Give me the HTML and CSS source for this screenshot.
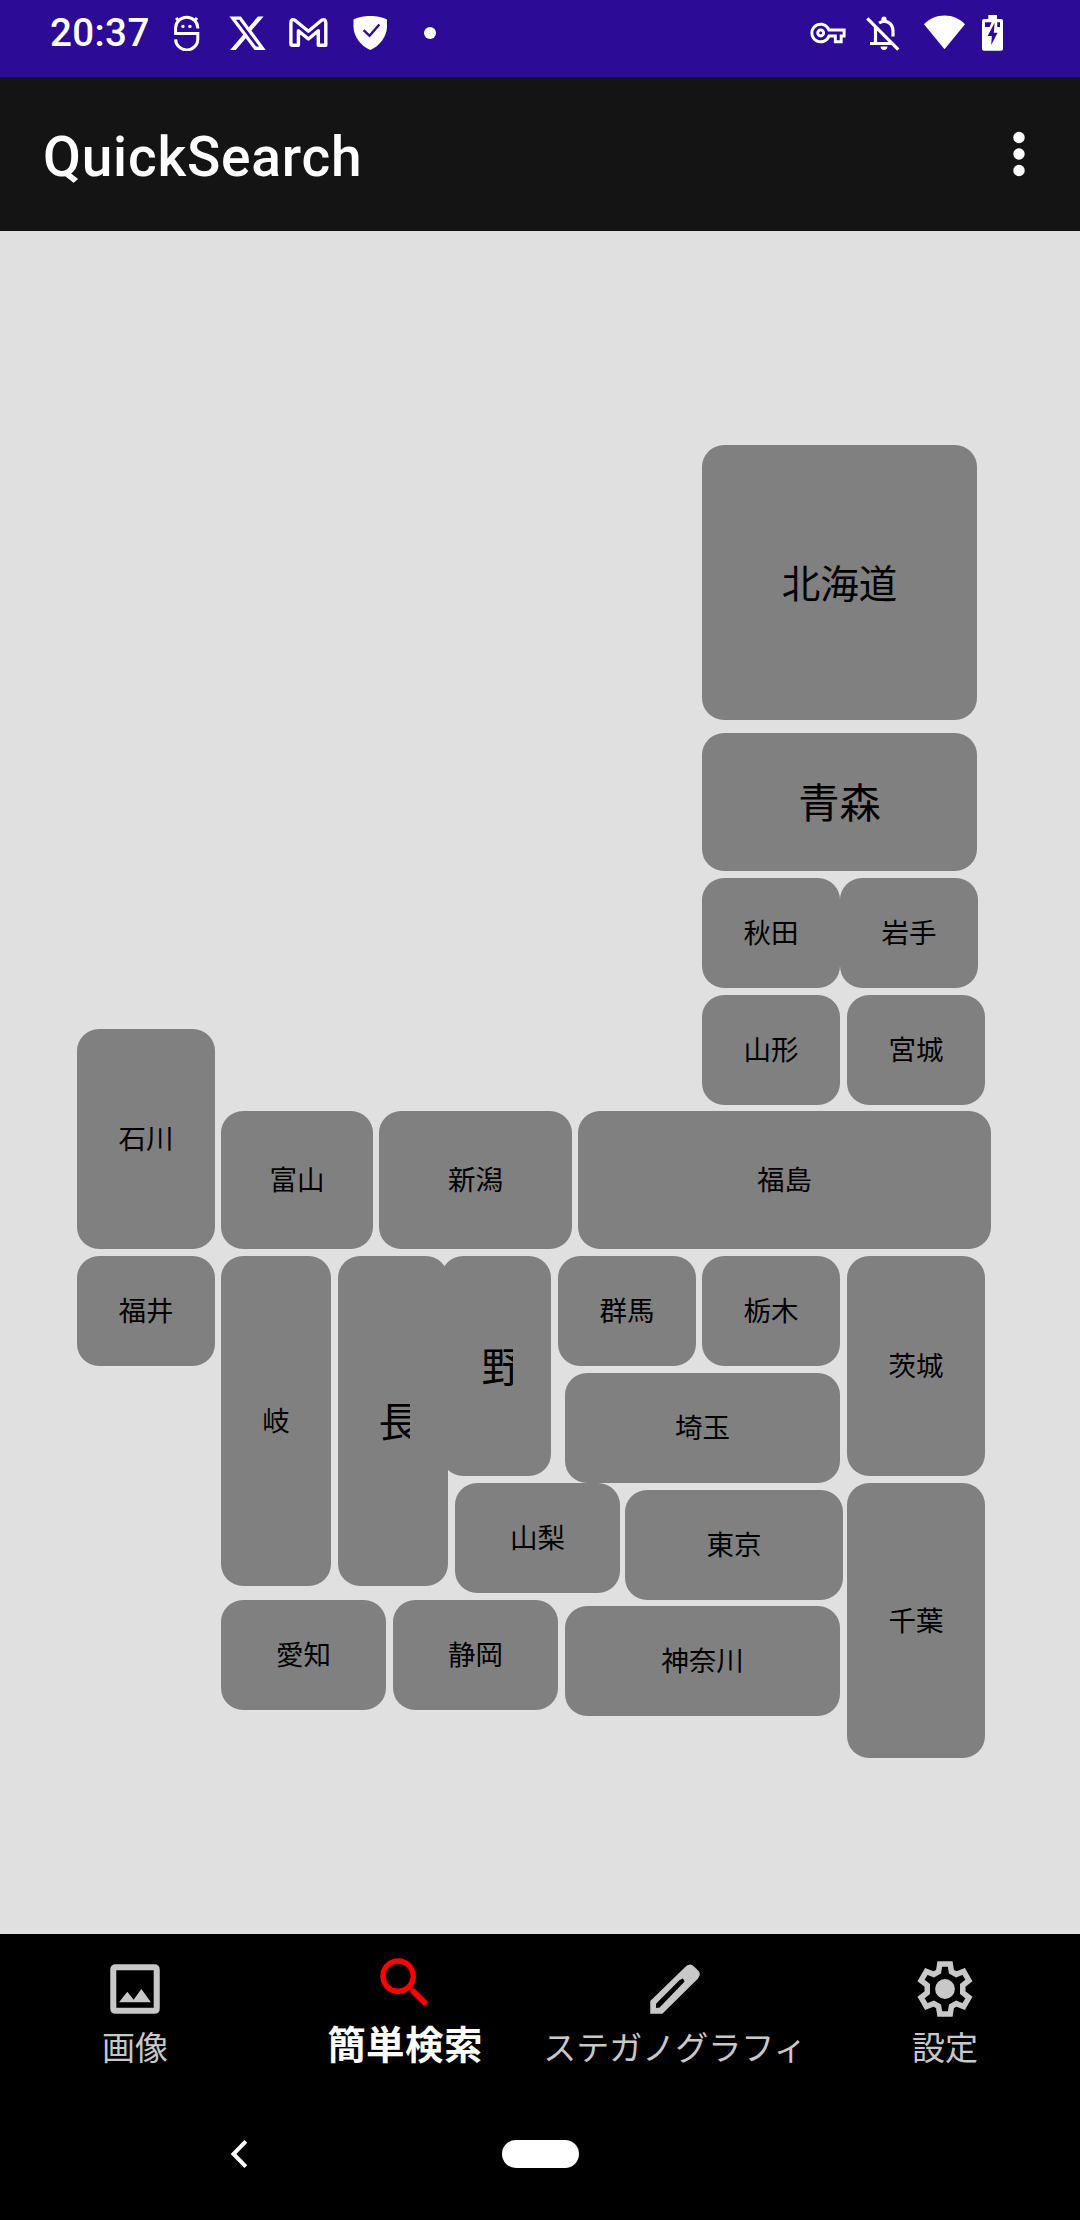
FILE: index.html
```html
<!DOCTYPE html>
<html lang="ja">
<head>
<meta charset="utf-8">
<title>QuickSearch</title>
<link rel="stylesheet" href="styles.css">
</head>
<body>
<div class="screen">
  <div class="status">
    <span class="clock">20:37</span>
    <svg class="ic-s" width="27" height="36" viewBox="0 0 27 36" fill="none" stroke="#fff" stroke-width="3"><path d="M24.800 13.500V13A11 10.600 0 0 0 2.600 13V18.600H24.800V24A11 10.600 0 0 1 2.600 24.400"/><path d="M3.200 2.800l2.800 3.600M24 2.800l-2.800 3.600"/><g fill="#fff" stroke="none"><circle cx="9.900" cy="11.400" r="1.700"/><circle cx="16.900" cy="11.400" r="1.700"/></g></svg>
    <svg class="ic-x" width="37" height="36" viewBox="1 1.4 22 21" preserveAspectRatio="none" fill="#fff"><path d="M18.244 2.25h3.308l-7.227 8.26 8.502 11.24H16.17l-5.214-6.817L4.99 21.75H1.68l7.73-8.835L1.254 2.25H8.08l4.713 6.231zm-1.161 17.52h1.833L7.084 4.126H5.117z"/></svg>
    <svg class="ic-m" width="39" height="36" viewBox="0 0 39 36" fill="none" stroke="#fff" stroke-width="3.400" stroke-linejoin="round"><path d="M6 5.300L19.400 16.200L32.600 5.300Q36.800 3.200 36.800 8V30.300H29.300V15.800L19.400 24L9.400 15.800V30.300H3.500Q1.900 30.300 1.900 29V8Q1.900 3.200 6 5.300Z"/></svg>
    <svg class="ic-shield" width="35" height="36" viewBox="0 0 35 36"><path fill="#fff" d="M17.300 1C11 1 4.500 2.600.5 4.400V12C.8 22 8 31 17.300 35C26.500 31 33.700 22 34 12V4.400C30 2.600 23.500 1 17.300 1Z"/><path d="M10.600 15.200L16.500 20.800L26.400 9.500" fill="none" stroke="#2c0b96" stroke-width="2.400"/></svg>
    <span class="more-dot"></span>
    <span class="spacer"></span>
    <svg class="ic-key" width="36" height="22" viewBox="0 4.500 24 15" fill="#fff"><path d="M22 19h-6v-4h-2.680c-1.140 2.420-3.600 4-6.320 4-3.860 0-7-3.140-7-7s3.140-7 7-7c2.720 0 5.170 1.580 6.320 4H24v6h-2v4zm-4-2h2v-4h2v-2H11.940l-.23-.67C11.010 8.340 9.110 7 7 7c-2.760 0-5 2.240-5 5s2.240 5 5 5c2.110 0 4.010-1.340 4.710-3.330l.23-.67H18v4zM7 15c-1.650 0-3-1.350-3-3s1.350-3 3-3 3 1.350 3 3-1.350 3-3 3zm0-4c-.55 0-1 .45-1 1s.45 1 1 1 1-.45 1-1-.45-1-1-1z"/></svg>
    <svg class="ic-bell" width="34" height="36" viewBox="0 0 34 36" fill="none" stroke="#fff" stroke-width="3.200"><path d="M1.300 3.300L32.300 34.700"/><path d="M9.500 12V28.500M4 28.500H27M13 8Q18 5 22.800 7.600Q27 10.300 27 16V21.500"/><circle cx="18" cy="4" r="2.600" fill="#fff" stroke="none"/><path d="M14.600 31.500H21.400A3.400 3.400 0 0 1 14.600 31.500Z" fill="#fff" stroke="none"/></svg>
    <svg class="ic-wifi" width="41" height="36" viewBox="0 0 41 36" fill="#fff"><path d="M20.500 34.300L0 9.200C5.500 3.800 12.500.5 20.500.5S35.500 3.800 41 9.200Z"/></svg>
    <svg class="ic-batt" width="21" height="36" viewBox="0 0 21 36"><path fill="#fff" d="M6.300 0H15V4H19Q21 4 21 6V34Q21 35.700 19 35.700H2Q0 35.700 0 34V6Q0 4 2 4H6.300Z"/><path fill="#2c0b96" d="M3 7.300H9.600L7.600 12H3ZM15.200 7.300H18V12H15.200ZM12.700 7.500L5.600 21H9.800L9.200 30L15.600 17.800H11.800Z"/></svg>
  </div>

  <header class="appbar">
    <h1 class="title">QuickSearch</h1>
    <svg class="menu" width="14" height="46" viewBox="0 0 14 46" fill="#fff"><circle cx="7" cy="6.500" r="5.700"/><circle cx="7" cy="23" r="5.700"/><circle cx="7" cy="39.500" r="5.700"/></svg>
  </header>

  <main class="map">
    <button class="pref large hokkaido">北海道</button>
    <button class="pref xlarge aomori">青森</button>
    <button class="pref akita">秋田</button>
    <button class="pref iwate">岩手</button>
    <button class="pref yamagata">山形</button>
    <button class="pref miyagi">宮城</button>
    <button class="pref ishikawa">石川</button>
    <button class="pref toyama">富山</button>
    <button class="pref niigata">新潟</button>
    <button class="pref fukushima">福島</button>
    <button class="pref fukui">福井</button>
    <button class="pref gifu">岐</button>
    <button class="pref xlarge nagano-w"><span class="clip">長</span></button>
    <button class="pref xlarge nagano-e"><span class="clip">野</span></button>
    <button class="pref gunma">群馬</button>
    <button class="pref tochigi">栃木</button>
    <button class="pref ibaraki">茨城</button>
    <button class="pref saitama">埼玉</button>
    <button class="pref yamanashi">山梨</button>
    <button class="pref tokyo">東京</button>
    <button class="pref chiba">千葉</button>
    <button class="pref aichi">愛知</button>
    <button class="pref shizuoka">静岡</button>
    <button class="pref kanagawa">神奈川</button>
  </main>

  <nav class="tabs">
    <a class="tab">
      <svg width="66" height="66" viewBox="0 0 24 24" fill="currentColor"><path fill-rule="evenodd" d="M5 3H19Q21 3 21 5V19Q21 21 19 21H5Q3 21 3 19V5Q3 3 5 3ZM5.200 5.200V18.800H18.800V5.200Z"/><path d="M6.200 16.800L9.200 13L11.500 15.900L14.300 12L17.800 16.800Z"/></svg>
      <span>画像</span>
    </a>
    <a class="tab active">
      <svg width="66" height="66" viewBox="0 0 24 24" fill="#f00"><path d="M15.500 14h-.79l-.28-.27C15.410 12.590 16 11.110 16 9.500 16 5.910 13.090 3 9.500 3S3 5.910 3 9.500 5.910 16 9.500 16c1.610 0 3.090-.59 4.230-1.570l.27.28v.79l5 4.990L20.490 19l-4.990-5zm-6 0C7.010 14 5 11.990 5 9.500S7.010 5 9.500 5 14 7.010 14 9.500 11.990 14 9.500 14z"/></svg>
      <span>簡単検索</span>
    </a>
    <a class="tab">
      <svg width="66" height="66" viewBox="0 0 24 24" fill="currentColor"><path fill-rule="evenodd" d="M3 16.400V21H7.400L20.300 8.300Q21.800 6.500 20.300 5.200L18.800 3.700Q17.500 2.400 15.800 3.900ZM5.100 17.400L13.700 8.700L14.900 8.200L15.500 9.300L6.400 18.700L5.100 18.900Z"/></svg>
      <span>ステガノグラフィ</span>
    </a>
    <a class="tab">
      <svg width="66" height="66" viewBox="0 0 24 24"><path fill="none" stroke="currentColor" stroke-width="2" d="M10.100 2.900H13.900L14.350 5.700L16.100 6.700L18.800 5.650L20.700 8.900L18.450 10.700V13.300L20.700 15.100L18.800 18.350L16.100 17.300L14.350 18.300L13.900 21.100H10.100L9.650 18.300L7.900 17.300L5.200 18.350L3.300 15.100L5.550 13.300V10.700L3.300 8.900L5.200 5.650L7.900 6.700L9.650 5.700Z"/><circle cx="12" cy="12" r="3.600" fill="currentColor"/></svg>
      <span>設定</span>
    </a>
  </nav>

  <div class="sysnav">
    <svg class="back" width="18" height="30" viewBox="0 0 18 30" fill="none" stroke="#fff" stroke-width="4"><path d="M15.800 2.400L3.500 15L15.800 27.600"/></svg>
    <span class="pill"></span>
  </div>
</div>
</body>
</html>
```
FILE: styles.css
```css
* { box-sizing: border-box; }
body {
  margin: 0;
  background: #000;
  font-family: Roboto, "Noto Sans CJK JP", sans-serif;
}
svg { display: block; flex: none; }
.screen {
  width: 1080px;
  height: 2220px;
  display: flex;
  flex-direction: column;
}

/* status bar */
.status {
  height: 77px;
  padding: 0 77px 11px 50px;
  background: #2c0b96;
  display: flex;
  align-items: center;
}
.clock {
  width: 101px;
  color: #fff;
  font-size: 38.5px;
  font-weight: 500;
  line-height: 66px;
  letter-spacing: 0.4px;
}
.ic-s { margin-left: 22px; }
.ic-x { margin-left: 29px; }
.ic-m { margin-left: 23px; }
.ic-shield { margin-left: 25px; }
.more-dot {
  width: 12px;
  height: 12px;
  margin-left: 36px;
  border-radius: 50%;
  background: #fff;
}
.spacer { flex: 1; }
.ic-bell { margin-left: 20px; }
.ic-wifi { margin-left: 24px; }
.ic-batt { margin-left: 17px; }

/* app bar */
.appbar {
  height: 154px;
  padding: 0 54px 0 43px;
  background: #141414;
  display: flex;
  align-items: center;
  justify-content: space-between;
}
.title {
  margin: 6px 0 0;
  color: #fff;
  font-size: 55px;
  font-weight: 500;
  line-height: 64px;
  letter-spacing: 0.8px;
}

/* prefecture map */
.map {
  position: relative;
  height: 1703px;
  background: #e0e0e0;
}
.pref {
  position: absolute;
  width: 138px;
  height: 110px;
  padding: 0 0 2px;
  border: 0;
  border-radius: 22px;
  background: #808080;
  color: #000;
  font: 27.5px/1 "Noto Sans CJK JP", sans-serif;
  display: flex;
  align-items: center;
  justify-content: center;
}
.large { font-size: 38.5px; }
.xlarge { font-size: 41.25px; }
.clip {
  width: 31px;
  margin-left: 2px;
  overflow: hidden;
  white-space: nowrap;
  text-align: left;
}
.hokkaido  { left: 702px; top: 214px; width: 275px; height: 275px; }
.aomori    { left: 702px; top: 502px; width: 275px; height: 138px; }
.akita     { left: 702px; top: 647px; }
.iwate     { left: 840px; top: 647px; }
.yamagata  { left: 702px; top: 764px; }
.miyagi    { left: 847px; top: 764px; }
.ishikawa  { left: 77px;  top: 798px; height: 220px; }
.toyama    { left: 221px; top: 880px; width: 152px; height: 138px; }
.niigata   { left: 379px; top: 880px; width: 193px; height: 138px; }
.fukushima { left: 578px; top: 880px; width: 413px; height: 138px; }
.fukui     { left: 77px;  top: 1025px; }
.gifu      { left: 221px; top: 1025px; width: 110px; height: 330px; }
.nagano-w  { left: 338px; top: 1025px; width: 110px; height: 330px; }
.nagano-e  { left: 441px; top: 1025px; width: 110px; height: 220px; }
.gunma     { left: 558px; top: 1025px; }
.tochigi   { left: 702px; top: 1025px; }
.ibaraki   { left: 847px; top: 1025px; height: 220px; }
.saitama   { left: 565px; top: 1142px; width: 275px; }
.yamanashi { left: 455px; top: 1252px; width: 165px; }
.tokyo     { left: 625px; top: 1259px; width: 218px; }
.chiba     { left: 847px; top: 1252px; height: 275px; }
.aichi     { left: 221px; top: 1369px; width: 165px; }
.shizuoka  { left: 393px; top: 1369px; width: 165px; }
.kanagawa  { left: 565px; top: 1375px; width: 275px; }

/* bottom tabs */
.tabs {
  height: 154px;
  display: grid;
  grid-template-columns: repeat(4, 1fr);
  color: #c8c8c8;
  font: 33px/40px "Noto Sans CJK JP", sans-serif;
}
.tab {
  padding-top: 22px;
  display: flex;
  flex-direction: column;
  align-items: center;
  gap: 4px;
  white-space: nowrap;
}
.tab.active {
  padding-top: 16px;
  gap: 4px;
  color: #fff;
  font-size: 38.5px;
  line-height: 44px;
  letter-spacing: 0.4px;
  font-weight: 700;
}

/* system navigation */
.sysnav {
  height: 132px;
  padding-left: 230px;
  display: flex;
  align-items: center;
}
.pill {
  width: 77px;
  height: 28px;
  margin-left: 254px;
  border-radius: 14px;
  background: #fff;
}
```
